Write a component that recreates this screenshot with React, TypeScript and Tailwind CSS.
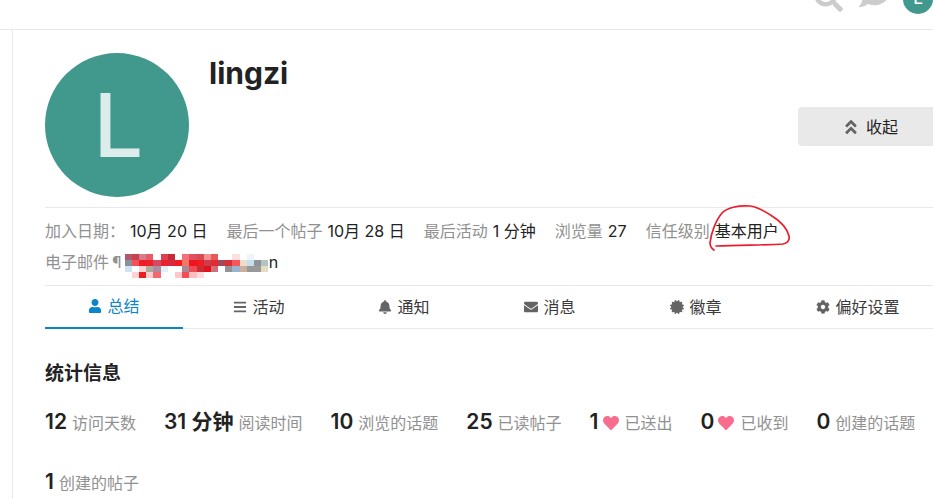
import React from 'react';
import { FaAngleDoubleUp, FaBars, FaBell, FaCertificate, FaCog, FaComment, FaEnvelope, FaHeart, FaSearch, FaUser } from 'react-icons/fa';

const font = "font-['Inter','Noto_Sans_CJK_SC',sans-serif]";

// pixelated email, one row per 6px
const mosaic: string[][] = [
  ['#b05a6c', '#c9404f', '#d87a8c', '#e85a68', '#fff', '#e0404c', '#c22a38', '#fff', '#f47078', '#e05060', '#d84a54', '#f49090', '#e85a5a', '#fff', '#fff', '#fde0e0', '#fff', '#eef5fa', '#fff', '#fff'],
  ['#8a8f98', '#f45058', '#f01c24', '#ec2028', '#d04a60', '#e82030', '#d82a3c', '#f41c20', '#f47868', '#f0141c', '#f01c24', '#c84050', '#e42a30', '#a04a5c', '#dc3038', '#f45858', '#ecdccc', '#c4e0ec', '#909498', '#b0c4c8'],
  ['#cfe2f2', '#fff', '#fbd4d4', '#b0a898', '#b08aa0', '#e4eef6', '#fff', '#fff', '#a88898', '#f04c54', '#cc2c34', '#e4101c', '#d07078', '#fff', '#909498', '#98b4d0', '#ccb09c', '#989898', '#989898', '#e6dcc4'],
  ['#fff', '#fcd4d4', '#f01c24', '#fcd0d0', '#f46870', '#fff', '#fff', '#fcc8cc', '#f44c54', '#fcc0c0', '#fddcdc', '#fff', '#fff', '#fff', '#fff', '#fff', '#fff', '#fff', '#fff', '#fff'],
];

const tabs = [
  { icon: <FaUser />, label: '总结', w: 'w-[138px]', active: true },
  { icon: <FaBars />, label: '活动', w: 'w-[138px]', active: false },
  { icon: <FaBell />, label: '通知', w: 'w-[138px]', active: false },
  { icon: <FaEnvelope />, label: '消息', w: 'w-[140px]', active: false },
  { icon: <FaCertificate />, label: '徽章', w: 'w-[138px]', active: false },
  { icon: <FaCog />, label: '偏好设置', w: 'w-[172px]', active: false },
];

function Meta({ label, value }: { label: string; value: React.ReactNode }) {
  return (
    <div className="flex items-baseline gap-[5px]">
      <span className="text-[#919191]">{label}</span>
      <span className="text-[#222222]">{value}</span>
    </div>
  );
}

function Stat({ num, label, heart }: { num: string; label: string; heart?: boolean }) {
  return (
    <div className="flex items-baseline h-[30px]">
      <span className="text-[21px] font-semibold leading-[30px] text-[#222222]">{num}</span>
      {heart && <FaHeart className="ml-[4px] self-center mt-[1px] text-[16px] text-[#fa6c8d]" />}
      <span className={`${heart ? 'ml-[6px]' : 'ml-[5px]'} text-[16px] text-[#919191]`}>{label}</span>
    </div>
  );
}

export default function App() {
  return (
    <div className={`relative w-[933px] h-[499px] overflow-hidden bg-white ${font}`}>
      {/* верхняя панель, обрезана сверху */}
      <div className="h-[30px] border-b border-[#e9e9e9] relative overflow-hidden">
        <FaSearch className="absolute left-[814px] top-[-17px] text-[29px] text-[#cccccc]" />
        <FaComment className="absolute left-[859px] top-[-21px] text-[30px] text-[#cccccc]" />
        <div className="absolute left-[903px] top-[-16px] w-[30px] h-[30px] rounded-full bg-[#41988d] text-white text-[17px] font-medium flex items-center justify-center">L</div>
      </div>

      <div className="flex">
        <div className="w-[13px] h-[469px] border-r border-[#e9e9e9] shrink-0" />
        <div className="pl-[32px] w-[1000px] shrink-0">
          <div className="flex pt-[23px] h-[178px] border-b border-[#e9e9e9]">
            <div className="w-[144px] h-[144px] rounded-full bg-[#41988d] flex items-center justify-center text-[#dcecea] text-[88px] font-medium leading-none shrink-0">
              <span className="ml-[3px]">L</span>
            </div>
            <div className="ml-[20px] w-[589px] shrink-0">
              <h1 className="text-[30px] font-bold leading-[40px] text-[#222222]">lingzi</h1>
            </div>
            <button className="mt-[54px] w-[144px] h-[39px] rounded-[4px] bg-[#e9e9e9] flex items-center justify-center gap-[6px] text-[16px] text-[#222222] shrink-0">
              <FaAngleDoubleUp className="text-[18px] text-[#646464]" />
              <span className="mt-[1px]">收起</span>
            </button>
          </div>

          <div className="h-[78px] text-[16px] border-b border-[#e9e9e9]">
            <div className="flex gap-[19px] pt-[11px] h-[42px] leading-[24px]">
              <Meta label="加入日期：" value="10月 20 日" />
              <Meta label="最后一个帖子" value="10月 28 日" />
              <Meta label="最后活动" value="1 分钟" />
              <Meta label="浏览量" value="27" />
              <Meta label="信任级别" value="基本用户" />
            </div>
            <div className="flex items-center h-[24px] leading-[24px]">
              <span className="text-[#919191]">电子邮件</span>
              <span className="ml-[3px] text-[#919191]">¶</span>
              <div className="ml-[3px] w-[144px] shrink-0 flex flex-col mt-[8px]">
                {mosaic.map((row, i) => (
                  <div key={i} className="flex h-[6px]">
                    {row.map((c, j) => (
                      <div key={j} className="w-[7.2px] h-[6px]" style={{ backgroundColor: c }} />
                    ))}
                  </div>
                ))}
              </div>
              <span className="text-[#222222]">n</span>
            </div>
          </div>

          <div className="flex gap-[7px] h-[43px] border-b border-[#e9e9e9]">
            {tabs.map((t) => (
              <div
                key={t.label}
                className={`${t.w} shrink-0 h-[43px] flex items-center justify-center gap-[5px] text-[16px] pb-[2px] ${
                  t.active ? 'border-b-2 border-[#0a85c9] text-[#0a85c9]' : 'text-[#3a3a3a]'
                }`}
              >
                <span className={`text-[14px] ${t.active ? 'text-[#0a85c9]' : 'text-[#646464]'}`}>{t.icon}</span>
                {t.label}
              </div>
            ))}
          </div>

          <h2 className="mt-[31px] text-[19px] font-bold leading-[28px] text-[#222222]">统计信息</h2>
          <div className="mt-[19px] w-[888px] flex flex-wrap gap-x-[28px] gap-y-[30px]">
            <Stat num="12" label="访问天数" />
            <Stat num="31 分钟" label="阅读时间" />
            <Stat num="10" label="浏览的话题" />
            <Stat num="25" label="已读帖子" />
            <Stat num="1" label="已送出" heart />
            <Stat num="0" label="已收到" heart />
            <Stat num="0" label="创建的话题" />
            <Stat num="1" label="创建的帖子" />
          </div>
        </div>
      </div>

      {/* красная пометка поверх страницы */}
      <svg className="absolute left-0 top-0 pointer-events-none" width="933" height="499" fill="none">
        <path
          d="M714 250 C711 248 710 246 710 243 C711 233 716 220 722 213 C727 208 738 205 750 206 C758 207 766 212 772 216 C780 221 787 228 789 236 C790 241 787 243 783 244 C770 245 740 245 716 246"
          stroke="#ec1c2c"
          strokeWidth="1.7"
          strokeLinecap="round"
        />
      </svg>
    </div>
  );
}
